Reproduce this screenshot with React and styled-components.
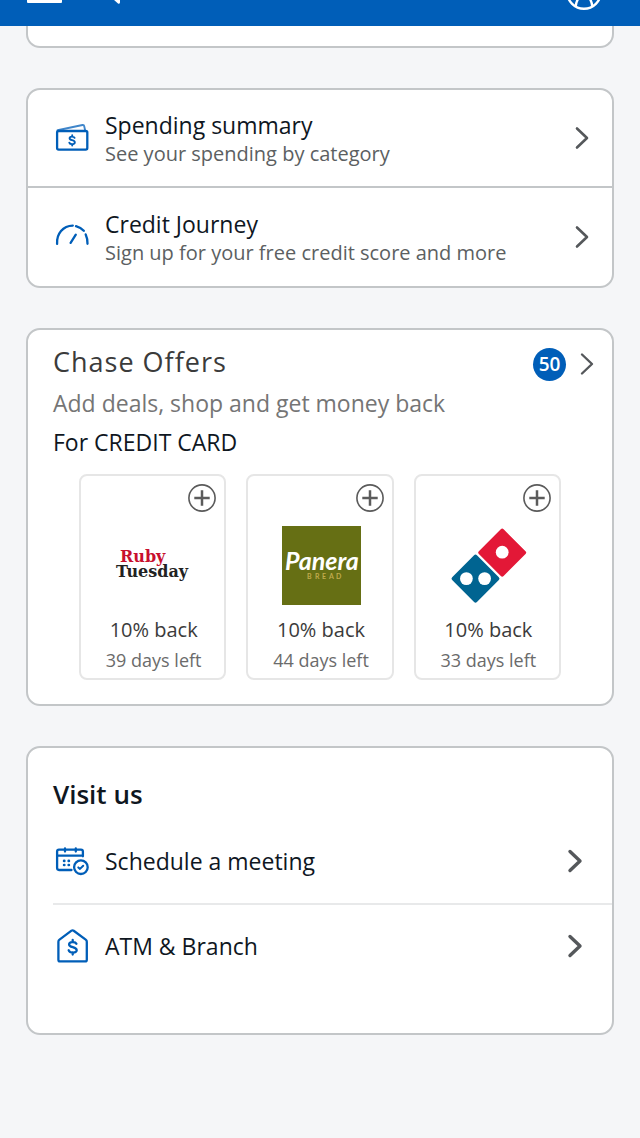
import React from "react";
import styled, { createGlobalStyle } from "styled-components";

const GlobalStyle = createGlobalStyle`
  * {
    box-sizing: border-box;
  }

  body {
    margin: 0;
    background: #f5f6f8;
    color: #0f171f;
    font-family: "Open Sans", "Noto Sans", sans-serif;
  }

  h2, p {
    margin: 0;
    font-weight: 400;
  }

  svg {
    display: block;
    flex-shrink: 0;
  }
`;

const TopBar = styled.header`
  display: flex;
  justify-content: space-between;
  align-items: flex-end;
  height: 26px;
  padding: 0 37px 14px 26px;
  background: #005eb8;
`;

const TopGroup = styled.div`
  display: flex;
  align-items: flex-end;
  gap: 45px;
`;

const IconButton = styled.button`
  display: block;
  padding: 0;
  border: 0;
  background: none;
  cursor: pointer;
`;

const Page = styled.main`
  display: flex;
  flex-direction: column;
  gap: 40px;
  padding: 0 26px 103px;
`;

const Card = styled.section`
  overflow: hidden;
  border: 2px solid #c3c6c8;
  border-radius: 14px;
  background: #ffffff;
`;

const CardEnd = styled(Card)`
  height: 22px;
  border-top: 0;
  border-radius: 0 0 14px 14px;
`;

const SummaryLink = styled.a`
  display: flex;
  align-items: center;
  height: 96px;
  padding: 0 22px 0 26px;
  color: inherit;
  text-decoration: none;

  & + & {
    height: 100px;
    border-top: 2px solid #c3c6c8;
  }
`;

const LinkText = styled.span`
  display: flex;
  flex-direction: column;
  flex-grow: 1;
  margin-left: 15px;
`;

const LinkTitle = styled.span`
  font-size: 23px;
  line-height: 32px;
`;

const LinkDetail = styled.span`
  color: #5c5f62;
  font-size: 20px;
  line-height: 26px;
`;

const OffersCard = styled(Card)`
  padding: 14px 17px 24px 25px;
`;

const OffersHeader = styled.div`
  display: flex;
  align-items: center;
  justify-content: space-between;
  height: 40px;
`;

const OffersTitle = styled.h2`
  align-self: flex-start;
  color: #3b3b3b;
  font-size: 27px;
  line-height: 36px;
  letter-spacing: 1px;
`;

const OffersLink = styled.a`
  display: flex;
  align-items: center;
  gap: 13px;
  text-decoration: none;
`;

const Badge = styled.span`
  width: 33px;
  height: 33px;
  border-radius: 50%;
  background: #005eb8;
  color: #ffffff;
  font-size: 19px;
  font-weight: 600;
  line-height: 32px;
  text-align: center;
`;

const OffersIntro = styled.p`
  color: #757575;
  font-size: 23px;
  line-height: 38px;
`;

const OffersAccount = styled.p`
  font-size: 23px;
  line-height: 40px;
`;

const OfferList = styled.div`
  display: grid;
  grid-template-columns: repeat(3, 1fr);
  gap: 20px;
  margin: 12px 34px 0 26px;
`;

const Offer = styled.article`
  display: flex;
  flex-direction: column;
  align-items: center;
  height: 206px;
  padding: 8px 8px 8px 10px;
  border: 2px solid #e6e6e6;
  border-radius: 8px;
`;

const AddButton = styled(IconButton)`
  align-self: flex-end;
`;

const Logo = styled.div`
  margin-top: 14px;
`;

const OfferAmount = styled.p`
  margin-top: 8px;
  color: #3b3b3b;
  font-size: 20px;
  line-height: 32px;
`;

const OfferExpiry = styled.p`
  color: #6b6b6b;
  font-size: 18px;
  line-height: 28px;
`;

const VisitCard = styled(Card)`
  padding: 27px 0 46px 25px;
`;

const VisitTitle = styled.h2`
  margin-bottom: 6px;
  font-size: 26px;
  font-weight: 600;
  line-height: 38px;
`;

const VisitLink = styled.a`
  display: flex;
  align-items: center;
  height: 84px;
  padding: 0 29px 0 1px;
  color: inherit;
  text-decoration: none;

  & + & {
    border-top: 2px solid #e8e9ea;
  }
`;

function Chevron({ width = 3 }) {
  return (
    <svg width="16" height="24" viewBox="0 0 16 24" fill="none" stroke="#55585b" strokeWidth={width} strokeLinecap="round" strokeLinejoin="round">
      <path d="M3 2.5 L13 12 L3 21.5" />
    </svg>
  );
}

function MoneyIcon() {
  return (
    <svg width="36" height="36" viewBox="0 0 36 36" fill="none" stroke="#005eb8" strokeWidth="2.3" strokeLinecap="round" strokeLinejoin="round">
      <path d="M3.5 10.2 L28.5 5 Q30 4.8 30.2 6.1 L31 9.8" strokeWidth="1.9" opacity="0.75" />
      <rect x="3.1" y="11" width="30.2" height="18.6" rx="1.6" />
      <path d="M20.6 17.8 C20 16.4 15.6 16 15.6 18.2 C15.6 20.8 20.8 19.6 20.8 22.4 C20.8 24.9 15.9 24.5 15.3 22.6 M18.2 15.2 V16.4 M18.2 24.3 V25.5" strokeWidth="1.9" />
    </svg>
  );
}

function GaugeIcon() {
  return (
    <svg width="36" height="36" viewBox="0 0 36 36" fill="none" stroke="#005eb8" strokeWidth="2.3" strokeLinecap="round">
      <path d="M3.1 24.8 C2.4 14.8 9 6.8 18.8 6.6" />
      <path d="M22 7.2 C25 8 27.8 9.6 29.8 11.8" />
      <path d="M31.7 15.4 C33.1 18.4 33.6 21.4 33.5 24.8" />
      <path d="M16.6 23.8 L21.8 15.6" />
    </svg>
  );
}

function CalendarIcon() {
  return (
    <svg width="36" height="36" viewBox="0 0 36 36" fill="none" stroke="#005eb8" strokeWidth="2.3" strokeLinecap="round" strokeLinejoin="round">
      <path d="M17.5 27 H5 Q3.1 27 3.1 25.1 V8.6 Q3.1 6.7 5 6.7 H27 Q28.9 6.7 28.9 8.6 V13.3 M3.1 12.6 H28.9 M11 5.4 V8.6 M21.8 5.4 V8.6" />
      <path d="M10.1 17.9 h0.2 M14.7 17.9 h0.2 M10.1 22 h0.2 M14.7 22 h0.2" strokeWidth="2.7" />
      <circle cx="26.9" cy="24.2" r="6.8" />
      <path d="M24.3 24.4 L26 25.9 L29.2 22.7" strokeWidth="2" />
    </svg>
  );
}

function BranchIcon() {
  return (
    <svg width="36" height="36" viewBox="0 0 36 36" fill="none" stroke="#005eb8" strokeWidth="2.3" strokeLinecap="round" strokeLinejoin="round">
      <path d="M4.4 13.8 Q4.4 12.4 5.5 11.6 L17.5 2.7 Q18.6 1.9 19.7 2.7 L31.7 11.6 Q32.8 12.4 32.8 13.8 V31.7 Q32.8 33.4 31.1 33.4 H6.1 Q4.4 33.4 4.4 31.7 Z" />
      <path d="M22.4 15.8 C21.4 13.4 15.1 13.3 15.1 16.4 C15.1 20 22.7 18.2 22.7 22.2 C22.7 25.5 15.8 25.2 14.7 22.3 M18.7 12 V14 M18.7 24.5 V26.5" />
    </svg>
  );
}

function PlusIcon() {
  return (
    <svg width="28" height="28" viewBox="0 0 28 28" fill="none" stroke="#5b5b5b">
      <circle cx="14" cy="14" r="13.1" strokeWidth="1.6" />
      <path d="M14 6.3 V21.7 M6.3 14 H21.7" strokeWidth="2.5" />
    </svg>
  );
}

function RubyTuesdayLogo() {
  return (
    <svg width="80" height="80" viewBox="0 0 80 80" fontFamily="'DejaVu Serif', serif" fontWeight="700" fontSize="16">
      <text>
        <tspan x="6" y="36" fill="#c8102e">Ruby</tspan>
        <tspan x="2" y="51" fill="#222222">Tuesday</tspan>
      </text>
    </svg>
  );
}

function PaneraLogo() {
  return (
    <svg width="80" height="80" viewBox="0 0 80 80" fontFamily="Lato, sans-serif" fontWeight="700">
      <rect x="1" y="0" width="79" height="79" fill="#666f14" />
      <text>
        <tspan x="4" y="44" fontSize="25" fontStyle="italic" fill="#ffffff">Panera</tspan>
        <tspan x="26 34 41 48 55" y="53" fontSize="7" fill="#c0ab4c">BREAD</tspan>
      </text>
    </svg>
  );
}

function DominosLogo() {
  return (
    <svg width="80" height="80" viewBox="0 0 80 80">
      <g transform="translate(54.2 26.6) rotate(45)">
        <rect x="-17.5" y="-17.5" width="35" height="35" rx="2" fill="#e31837" />
      </g>
      <g transform="translate(27.5 52.6) rotate(45)">
        <rect x="-17.5" y="-17.5" width="35" height="35" rx="2" fill="#006491" />
      </g>
      <circle cx="54.2" cy="26.2" r="6.4" fill="#ffffff" />
      <circle cx="18.4" cy="52.6" r="6.4" fill="#ffffff" />
      <circle cx="36.6" cy="52.6" r="6.4" fill="#ffffff" />
    </svg>
  );
}

const offers = [
  { name: "Ruby Tuesday", amount: "10% back", expiry: "39 days left", logo: <RubyTuesdayLogo /> },
  { name: "Panera Bread", amount: "10% back", expiry: "44 days left", logo: <PaneraLogo /> },
  { name: "Domino's", amount: "10% back", expiry: "33 days left", logo: <DominosLogo /> }
];

export default function App() {
  return (
    <>
      <GlobalStyle />
      <TopBar>
        <TopGroup>
          <IconButton aria-label="Menu">
            <svg width="36" height="12" viewBox="0 0 36 12">
              <rect x="1" y="-6" width="35" height="9" rx="1" fill="#ffffff" />
            </svg>
          </IconButton>
          <IconButton aria-label="Search">
            <svg width="14" height="12" viewBox="0 0 14 12">
              <path d="M6 -1 L13 -1 V2.6 Q12.6 4.4 11 3.6 Z" fill="#ffffff" />
            </svg>
          </IconButton>
        </TopGroup>
        <IconButton aria-label="Profile">
          <svg width="38" height="12" viewBox="0 0 38 12" fill="none" stroke="#ffffff" strokeWidth="2.4">
            <circle cx="19" cy="-8" r="16.8" />
            <path d="M13 -1 Q11.2 2 10.8 6 M25 -1 Q26.8 2 27.2 6" />
          </svg>
        </IconButton>
      </TopBar>
      <Page>
        <CardEnd />
        <Card>
          <SummaryLink href="#spending">
            <MoneyIcon />
            <LinkText>
              <LinkTitle>Spending summary</LinkTitle>
              <LinkDetail>See your spending by category</LinkDetail>
            </LinkText>
            <Chevron width={2.6} />
          </SummaryLink>
          <SummaryLink href="#credit">
            <GaugeIcon />
            <LinkText>
              <LinkTitle>Credit Journey</LinkTitle>
              <LinkDetail>Sign up for your free credit score and more</LinkDetail>
            </LinkText>
            <Chevron width={2.6} />
          </SummaryLink>
        </Card>
        <OffersCard>
          <OffersHeader>
            <OffersTitle>Chase Offers</OffersTitle>
            <OffersLink href="#offers" aria-label="All 50 offers">
              <Badge>50</Badge>
              <Chevron width={2.4} />
            </OffersLink>
          </OffersHeader>
          <OffersIntro>Add deals, shop and get money back</OffersIntro>
          <OffersAccount>For CREDIT CARD</OffersAccount>
          <OfferList>
            {offers.map(offer => (
              <Offer key={offer.name}>
                <AddButton aria-label={`Add ${offer.name} offer`}>
                  <PlusIcon />
                </AddButton>
                <Logo>{offer.logo}</Logo>
                <OfferAmount>{offer.amount}</OfferAmount>
                <OfferExpiry>{offer.expiry}</OfferExpiry>
              </Offer>
            ))}
          </OfferList>
        </OffersCard>
        <VisitCard>
          <VisitTitle>Visit us</VisitTitle>
          <VisitLink href="#meeting">
            <CalendarIcon />
            <LinkText>
              <LinkTitle>Schedule a meeting</LinkTitle>
            </LinkText>
            <Chevron width={3.4} />
          </VisitLink>
          <VisitLink href="#branch">
            <BranchIcon />
            <LinkText>
              <LinkTitle>ATM &amp; Branch</LinkTitle>
            </LinkText>
            <Chevron width={3.4} />
          </VisitLink>
        </VisitCard>
      </Page>
    </>
  );
}
